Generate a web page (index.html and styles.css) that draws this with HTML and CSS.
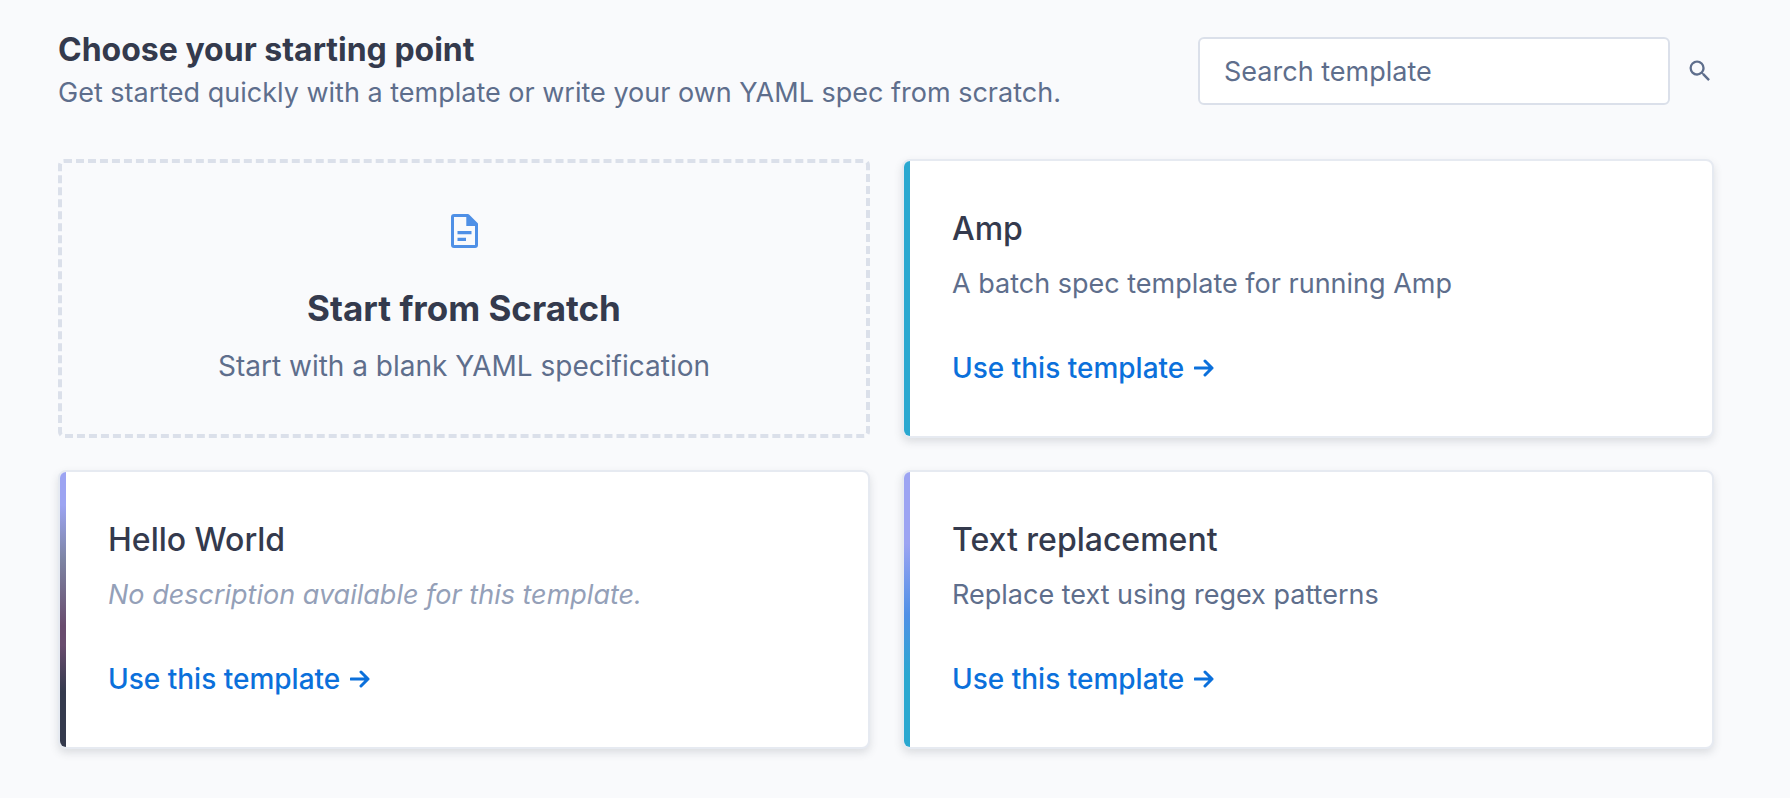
FILE: index.html
```
<!DOCTYPE html>
<html lang="en">
<head>
  <meta charset="UTF-8" />
  <title>Choose your starting point</title>
  <meta name="viewport" content="width=device-width, initial-scale=1.0" />
  <link rel="stylesheet" href="styles.css">
</head>
<body>

  <main class="page">
    <!-- Header -->
    <header class="header">
      <div class="header-text">
        <h1>Choose your starting point</h1>
        <p class="subtitle">Get started quickly with a template or write your own YAML spec from scratch.</p>
      </div>
      <form class="search" role="search">
        <input type="search" class="search-input" placeholder="Search template" aria-label="Search template" />
        <button type="submit" class="search-btn" aria-label="Search">
          <svg class="search-icon" viewBox="0 0 24 24" aria-hidden="true">
            <path fill="currentColor" d="M9.5 3A6.5 6.5 0 0 1 16 9.500c0 1.610-.590 3.090-1.560 4.230l.270.270h.790l5 5-1.500 1.500-5-5v-.790l-.270-.270A6.516 6.516 0 0 1 9.500 16 6.500 6.500 0 0 1 3 9.500 6.500 6.500 0 0 1 9.500 3m0 2C7 5 5 7 5 9.500S7 14 9.500 14 14 12 14 9.500 12 5 9.500 5z"/>
          </svg>
        </button>
      </form>
    </header>

    <!-- Templates -->
    <section class="templates">
      <button type="button" class="scratch">
        <svg class="file-icon" viewBox="0 0 27 34" aria-hidden="true">
          <path fill="none" stroke="currentColor" stroke-width="3" stroke-linejoin="round" d="M3 1.500H17L25.500 10V31Q25.500 32.500 24 32.500H3Q1.500 32.500 1.500 31V3Q1.500 1.500 3 1.500Z"/>
          <path fill="currentColor" d="M15.300 1.500H17.500L25.500 9.500V12H15.300ZM6.500 17H20.500V20.300H6.500ZM6.500 23.700H15V27H6.500Z"/>
        </svg>
        <span class="scratch-title">Start from Scratch</span>
        <span class="scratch-text">Start with a blank YAML specification</span>
      </button>

      <article class="card">
        <div class="stripe stripe-teal"></div>
        <div class="card-body">
          <h2>Amp</h2>
          <p>A batch spec template for running Amp</p>
          <a href="#amp" class="card-link">Use this template
            <svg class="arrow" viewBox="0 0 20 18" aria-hidden="true"><path d="M1 9H18M11 2L18 9L11 16"/></svg>
          </a>
        </div>
      </article>

      <article class="card">
        <div class="stripe stripe-dark"></div>
        <div class="card-body">
          <h2>Hello World</h2>
          <p class="empty">No description available for this template.</p>
          <a href="#hello-world" class="card-link">Use this template
            <svg class="arrow" viewBox="0 0 20 18" aria-hidden="true"><path d="M1 9H18M11 2L18 9L11 16"/></svg>
          </a>
        </div>
      </article>

      <article class="card">
        <div class="stripe stripe-blue"></div>
        <div class="card-body">
          <h2>Text replacement</h2>
          <p>Replace text using regex patterns</p>
          <a href="#text-replacement" class="card-link">Use this template
            <svg class="arrow" viewBox="0 0 20 18" aria-hidden="true"><path d="M1 9H18M11 2L18 9L11 16"/></svg>
          </a>
        </div>
      </article>
    </section>
  </main>

</body>
</html>
```

FILE: styles.css
```
* {
  box-sizing: border-box;
}
body {
  margin: 0;
  font-family: Inter, "Liberation Sans", sans-serif;
  font-size: 27px;
  line-height: 42px;
  color: #343a4d;
  background: #f9fafc;
}
h1, h2, p {
  margin: 0;
}
.page {
  padding: 28px 76px 48px 58px;
}
.header {
  display: flex;
  align-items: center;
  justify-content: space-between;
  gap: 32px;
  margin-bottom: 45px;
}
h1 {
  font-size: 32px;
  line-height: 44px;
  font-weight: 700;
}
.subtitle {
  color: #5e6e8c;
}
.search {
  display: flex;
  align-items: center;
  gap: 16px;
  width: 516px;
}
.search-input {
  flex: 1;
  min-width: 0;
  height: 68px;
  padding: 0 24px;
  font: inherit;
  color: #343a4d;
  background: #fff;
  border: 2px solid #dbe0ea;
  border-radius: 6px;
  appearance: none;
}
.search-input::placeholder {
  color: #5e6e8c;
  opacity: 1;
}
.search-btn {
  display: flex;
  padding: 0;
  border: none;
  background: none;
  color: #5e6e8c;
  cursor: pointer;
}
.search-icon {
  width: 28px;
  height: 28px;
}
.templates {
  display: grid;
  grid-template-columns: 1fr 1fr;
  gap: 32px;
}
.scratch {
  display: flex;
  flex-direction: column;
  align-items: center;
  padding: 51px 32px 42px;
  font: inherit;
  color: #343a4d;
  background: none;
  border: 4px dashed #dbe0ea;
  border-radius: 6px;
  cursor: pointer;
}
.file-icon {
  width: 27px;
  height: 34px;
  color: #4f90e6;
}
.scratch-title {
  margin-top: 36px;
  font-size: 35px;
  line-height: 48px;
  font-weight: 700;
}
.scratch-text {
  margin-top: 13px;
  font-size: 28px;
  color: #5e6e8c;
}
.card {
  display: flex;
  overflow: hidden;
  background: #fff;
  border: 2px solid #e6eaf1;
  border-radius: 8px;
  box-shadow: 0 4px 8px rgba(52, 58, 77, 0.15);
}
.stripe {
  width: 6px;
}
.stripe-teal {
  background: #2aa8d0;
}
.stripe-dark {
  background: linear-gradient(#9ca4f2 12%, #7d84a3 32%, #694c6e 56%, #694c6e 63%, #343a4d 80%);
}
.stripe-blue {
  background: linear-gradient(#9ca4f2 26%, #4f90e6 52%, #2aa8d0 74%);
}
.card-body {
  flex: 1;
  padding: 46px 42px 47px;
}
h2 {
  font-size: 32px;
  line-height: 44px;
  font-weight: 500;
}
.card-body p {
  margin: 12px 0 42px;
  color: #5e6e8c;
}
.card-body .empty {
  color: #94a0b8;
  font-style: italic;
}
.card-link {
  display: flex;
  align-items: center;
  gap: 10px;
  width: fit-content;
  font-size: 28px;
  color: #0b70db;
  font-weight: 500;
  text-decoration: none;
}
.card-link:hover {
  text-decoration: underline;
}
.arrow {
  width: 20px;
  height: 18px;
  fill: none;
  stroke: currentColor;
  stroke-width: 3;
  stroke-linecap: round;
  stroke-linejoin: round;
}
```
